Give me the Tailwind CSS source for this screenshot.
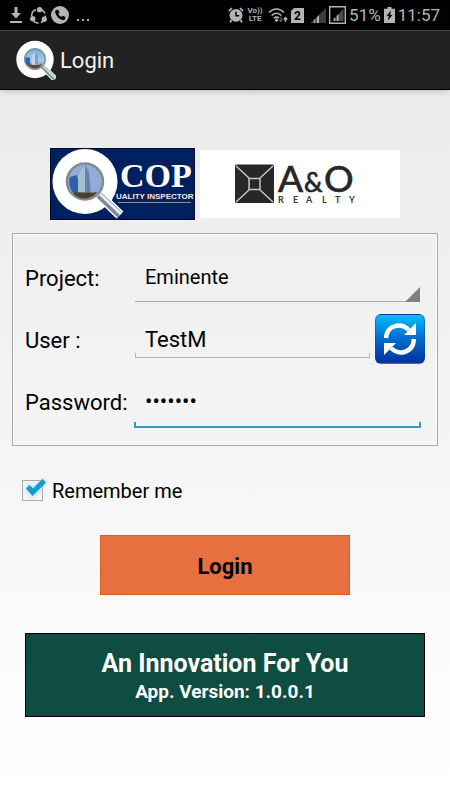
<!DOCTYPE html>
<html lang="en">
<head>
    <meta charset="UTF-8">
    <meta name="viewport" content="width=device-width, initial-scale=1.0">
    <title>Login</title>
    <script src="https://cdn.jsdelivr.net/npm/@tailwindcss/browser@4"></script>
</head>
<body class="min-h-screen flex flex-col bg-linear-to-b from-[#e8e8e8] to-white font-[Roboto,sans-serif] text-black">

    <!-- Status bar -->
    <div class="h-[30px] bg-black text-[#b4b4b4] flex items-center justify-between pl-2.5 pr-2.5">
        <div class="flex items-center gap-2">
            <svg class="w-3 h-4" viewBox="0 0 12 16" fill="currentColor"><path d="M4.500 0h3v6H11L6 11.500 1 6h3.500zM0 14h12v2H0z"/></svg>
            <svg class="w-[17px] h-[17px]" viewBox="0 0 16 16" fill="currentColor">
                <circle cx="8" cy="8.500" r="6.500" fill="none" stroke="currentColor" stroke-width="1.500" stroke-dasharray="8 2" />
                <circle cx="9" cy="2.500" r="2.500"/><circle cx="2.600" cy="11" r="2.500"/><circle cx="13.400" cy="11.500" r="2.500"/>
            </svg>
            <svg class="w-[18px] h-[18px] -ml-1" viewBox="0 0 18 18">
                <circle cx="9" cy="9" r="9" fill="currentColor"/>
                <path d="M5.200 4l2-.3 1.300 2.900-1.200 1.300c.7 1.300 1.700 2.300 3 3l1.300-1.200 2.800 1.300-.2 2c-.4.900-1.400 1.200-2.400 1C8.200 13.200 4.800 9.800 4.200 6.200c-.1-1 .2-1.800 1-2.200z" fill="#000"/>
            </svg>
            <svg class="w-3 h-4" viewBox="0 0 12 16" fill="currentColor"><path d="M0 12h2v2H0zM5 12h2v2H5zM10 12h2v2h-2z"/></svg>
        </div>
        <div class="flex items-center gap-[3px]">
            <svg class="w-4 h-4" viewBox="0 0 16 16">
                <circle cx="8" cy="8.300" r="6.400" fill="currentColor"/>
                <path d="M.8 4.200L4 1M12 1l3.200 3.200M3.500 13l-1.500 2.500M12.500 13l1.500 2.500" stroke="currentColor" stroke-width="1.700"/>
                <path d="M8 4.800V8.800h3.200" fill="none" stroke="#000" stroke-width="1.500"/>
            </svg>
            <div class="w-4 flex flex-col items-center text-[8px] leading-[8px] font-bold"><span>Vo))</span><span>LTE</span></div>
            <svg class="w-5 h-4 ml-0.5" viewBox="0 0 20 16" fill="none">
                <path d="M1 5.500C5.500.8 11.500.8 16 5.500M3.600 8.500c3-3 6.800-3 9.800 0M6 11.200c1.600-1.400 3.400-1.400 5 0" stroke="currentColor" stroke-width="1.700"/>
                <path d="M8.500 11.300l2 2.200-2 1.500-2-1.500z" fill="currentColor"/>
                <path d="M13 9.500v5M11.300 12.500l1.700 2 1.700-2" stroke="#555" stroke-width="1.300"/>
                <path d="M17.500 15v-4M15.800 12.500l1.700-2 1.700 2" stroke="currentColor" stroke-width="1.300"/>
            </svg>
            <svg class="w-[13px] h-[15px]" viewBox="0 0 13 15">
                <path d="M3 0h10v15H0V3z" fill="currentColor"/>
                <text x="6.500" y="12" text-anchor="middle" font-family="Roboto" font-size="12" font-weight="700" fill="#000">2</text>
            </svg>
            <svg class="w-[15px] h-[15px] ml-1" viewBox="0 0 15 15">
                <path d="M15 0v15H8V7z" fill="#3c3c3c"/><path d="M8 7v8H5.500V9.500zM4.500 10.500V15h-2v-2.500zM1.500 13.500V15H0z" fill="currentColor"/>
            </svg>
            <svg class="w-[17px] h-[18px]" viewBox="0 0 17 18">
                <path d="M.7.700h15.600v16.600H.7z" fill="none" stroke="currentColor" stroke-width="1.400"/>
                <path d="M14.500 3v12H9V8.500z" fill="#4a4a4a"/><path d="M9.500 8v7H7.500v-5zM6.500 11v4h-2v-2z" fill="currentColor"/>
            </svg>
            <span class="text-[17px] leading-none">51%</span>
            <svg class="w-[11px] h-4" viewBox="0 0 11 16">
                <path d="M3.500 0h4v1.700H11V16H0V1.700h3.500z" fill="currentColor"/><path d="M7 3.500L2.500 9h2.300L3.800 13.500 8.500 8H6.200z" fill="#000"/>
            </svg>
            <span class="text-[17px] leading-none">11:57</span>
        </div>
    </div>

    <!-- Action bar -->
    <header class="h-[60px] bg-[#222] border-t border-b border-t-[#444] border-b-black shadow-md flex items-center pl-4 gap-1">
        <svg class="w-10 h-10" viewBox="0 0 40 40">
            <defs>
                <linearGradient id="sky" x1="0" y1="0" x2="0" y2="1"><stop offset="0" stop-color="#6fa9e6"/><stop offset="0.600" stop-color="#a9cdf0"/><stop offset="1" stop-color="#6b5a45"/></linearGradient>
            </defs>
            <circle cx="19" cy="19.500" r="18.700" fill="#fff"/>
            <path d="M26 26l13 13" stroke="#fff" stroke-width="6"/>
            <path d="M26 26l13 13" stroke="#76939c" stroke-width="4"/>
            <path d="M26.500 25.500l13 13" stroke="#dce8ec" stroke-width="1.500"/>
            <circle cx="19" cy="19" r="10.300" fill="url(#sky)" stroke="#8593a0" stroke-width="1.500"/>
            <path d="M10 17l4 1v8l-3-1c-2-3-2-5-1-8z" fill="#2766ad"/>
            <path d="M16 26V16l3-4 3 3v12z" fill="#c0d5e9"/><path d="M19 12l3 3v12h-3z" fill="#8aa0bb"/>
            <path d="M12 24c4 1 10 2 14 0-3 5.500-10 6-14 0z" fill="#584928"/>
        </svg>
        <h1 class="pt-px text-[22px] leading-7 text-[#f3f3f3]">Login</h1>
    </header>

    <main class="flex-1 flex flex-col px-3 pt-[58px]">
        <!-- Logos -->
        <div class="flex justify-center items-center gap-[5px]">
            <svg class="w-[145px] h-[72px]" viewBox="0 0 145 72" role="img" aria-label="QCOP Quality Inspector">
                <path d="M0 0h145v72H0z" fill="#00205f"/>
                <path d="M.5.500h144v71H.5z" fill="none" stroke="#000a2c"/>
                <circle cx="35" cy="33.500" r="32.500" fill="#fff"/>
                <path d="M49 47l21 20" stroke="#fff" stroke-width="10"/>
                <path d="M49 47l21 20" stroke="#7f8b94" stroke-width="7"/>
                <path d="M50 46l21 20" stroke="#e6edf0" stroke-width="3"/>
                <circle cx="35" cy="33.500" r="18" fill="#91abd9" stroke="#858990" stroke-width="2.500"/>
                <path d="M20 29l7-2 4 21-6-1c-5-5-7-11-5-18z" fill="#2c62a5"/>
                <path d="M28 49V29l4-8 4-4v32z" fill="#a9bcd6"/><path d="M35 17l4 7 2 25h-6z" fill="#6880a8"/>
                <path d="M23 45c7-2 16 1 24-1-5 8-18 9-24 1z" fill="#4b402d"/>
                <text x="70" y="39" font-family="Liberation Serif" font-size="34" font-weight="700" fill="#fff">COP</text>
                <text x="66" y="51" font-family="Liberation Sans" font-size="8" font-weight="700" fill="#f6e6e4">UALITY INSPECTOR</text>
                <path d="M68 54.500h73" stroke="#8a8fb0"/>
            </svg>
            <svg class="w-[200px] h-[68px]" viewBox="0 0 200 68" role="img" aria-label="A&amp;O Realty">
                <path d="M0 0h200v68H0z" fill="#fff"/>
                <rect x="35" y="14.500" width="39" height="38.500" rx="1.500" fill="#282628"/>
                <path d="M36 16l13 12M73 16L60 28M36 52l13-12M73 52L60 40M49 28.500h11v11H49z" fill="none" stroke="#c8c8c8" stroke-width="1.500"/>
                <g fill="#282628" stroke="#282628" stroke-width="0.700" font-family="Lato">
                    <text x="78" y="42" font-size="37">A</text>
                    <text x="104" y="42" font-size="26">&amp;</text>
                    <text x="124" y="42" font-size="37">O</text>
                </g>
                <g font-family="Lato" font-size="9" font-weight="700" fill="#3a3839">
                    <text x="78" y="53">R</text><text x="93" y="53">E</text><text x="106" y="53">A</text><text x="122" y="53">L</text><text x="135" y="53">T</text><text x="149" y="53">Y</text>
                </g>
            </svg>
        </div>

        <form class="flex flex-col">
            <div class="mt-[13px] border border-[#aaa] shadow-[inset_0_0_0_1px_#fafafa] px-3 pt-[18px] pb-[17px] flex flex-col gap-3">
                <div class="flex items-center h-[50px]">
                    <label for="project" class="w-[110px] pt-0.5 text-[22px]">Project:</label>
                    <div class="relative flex-1 self-stretch mr-[5px]">
                        <select id="project" class="appearance-none w-full h-full border-b border-[#aaa] pl-2.5 text-[20px] outline-none">
                            <option>Eminente</option>
                        </select>
                        <svg class="absolute right-0 bottom-0 w-[15px] h-[15px] pointer-events-none" viewBox="0 0 15 15"><path d="M15 0v15H0z" fill="#808080"/></svg>
                    </div>
                </div>
                <div class="flex items-center h-[50px]">
                    <label for="user" class="w-[110px] pt-0.5 text-[22px]">User :</label>
                    <div class="flex-1 flex flex-col h-11 self-start min-w-0">
                        <input id="user" type="text" value="TestM" class="flex-1 min-h-0 w-full pl-2.5 pt-3 text-[22px] outline-none">
                        <div class="h-[5px] border-x border-b border-[#b4b4b4]"></div>
                    </div>
                    <button type="button" aria-label="Refresh" class="ml-[5px] w-[50px] h-[50px] rounded-md bg-linear-to-b from-[#00bdfb] via-[#006ccb] to-[#00309c] border border-[#0748a9]/50 flex items-center justify-center">
                        <svg class="w-[34px] h-[34px]" viewBox="0 0 34 34" fill="none" stroke="#fff" stroke-width="4.500">
                            <path d="M3 16C4 3 18 0 26 8"/><path d="M33 1v12H21z" fill="#fff" stroke="none"/>
                            <path d="M31 17c-1 14-15 17-23 9"/><path d="M1 33V21h12z" fill="#fff" stroke="none"/>
                        </svg>
                    </button>
                </div>
                <div class="flex items-center h-[52px]">
                    <label for="password" class="w-[109px] text-[22px]">Password:</label>
                    <div class="flex-1 flex flex-col self-stretch min-w-0 mr-1">
                        <input id="password" type="password" value="1234567" class="flex-1 min-h-0 w-full pl-[11px] pt-1 text-[22px] outline-none">
                        <div class="h-[6px] border-x-2 border-b-2 border-[#3399c7]"></div>
                    </div>
                </div>
            </div>

            <label class="mt-[31px] ml-2.5 flex items-center gap-2 text-[20px] leading-7 self-start">
                <span class="relative w-[22px] h-[22px]">
                    <input type="checkbox" checked class="peer block appearance-none w-[21px] h-[21px] border border-[#aaa] bg-[#f2f4f5]">
                    <svg class="hidden peer-checked:block absolute -top-1 left-0 w-6 h-6 pointer-events-none drop-shadow-[0_0_2px_#8fd4f0]" viewBox="0 0 24 24"><path d="M4 12.500l3.500-3.500 3.500 3.500L20.500 3 24 6.500 10.500 20z" fill="#169bd0"/></svg>
                </span>
                Remember me
            </label>

            <button type="submit" class="mt-[30px] pt-0.5 self-center w-[250px] h-[60px] bg-[#e67040] border border-[#e35a14] text-[22px] font-bold">Login</button>
        </form>

        <footer class="mt-[38px] mx-[13px] h-[84px] bg-[#0f4c41] border border-black text-white font-bold text-center flex flex-col justify-center">
            <p class="pt-0.5 text-[25px] leading-8">An Innovation For You</p>
            <p class="text-[19px] leading-6">App. Version: 1.0.0.1</p>
        </footer>
    </main>

</body>
</html>
